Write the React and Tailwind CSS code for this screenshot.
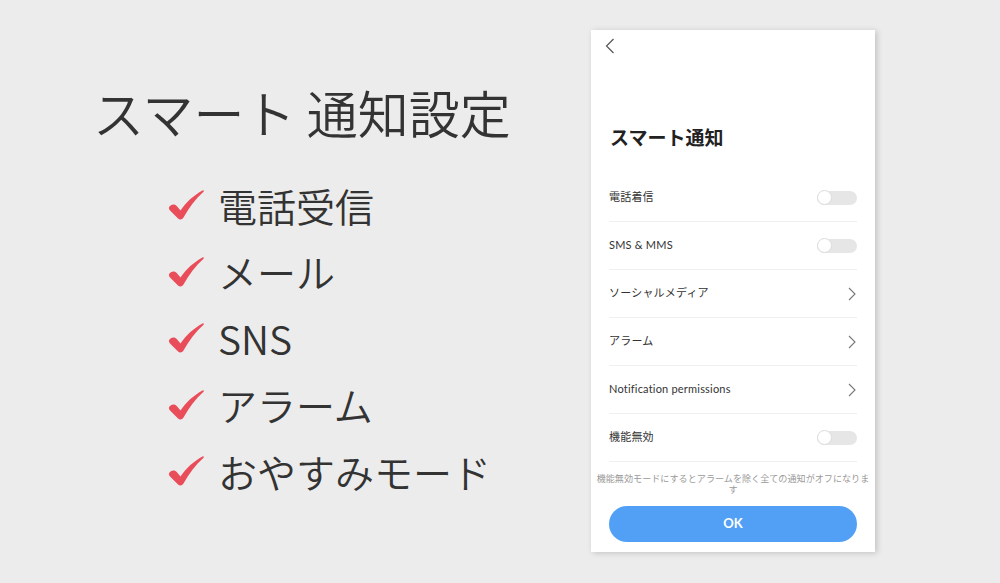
const features = ["電話受信", "メール", "SNS", "アラーム", "おやすみモード"];

const rows = [
  { label: "電話着信", kind: "toggle" },
  { label: "SMS & MMS", kind: "toggle" },
  { label: "ソーシャルメディア", kind: "link" },
  { label: "アラーム", kind: "link" },
  { label: "Notification permissions", kind: "link" },
  { label: "機能無効", kind: "toggle" },
];

function Check() {
  return (
    <svg width="36" height="30" viewBox="0 0 36 30" className="shrink-0">
      <path
        d="M1.5 16.5C3.5 13.8 6.5 13.8 8.5 15.8L12.5 20.5C18 12 26 5.2 34.5 0.5C35.8 0 36.3 1 35.3 2C27.5 9 20.8 18 15.5 27.5C14.2 29.8 11.5 30.2 9.8 28.2L2 20.5C0.8 19.3 0.6 17.6 1.5 16.5Z"
        fill="#e94d5a"
      />
    </svg>
  );
}

function Toggle() {
  return (
    <div className="relative w-[40px] h-[14px] rounded-full bg-[#e6e6e6]">
      <div className="absolute left-0 top-[-0.5px] w-[15px] h-[15px] rounded-full bg-white border border-[#dcdcdc]" />
    </div>
  );
}

function ChevronRight() {
  return (
    <svg width="8" height="14" viewBox="0 0 8 14" className="mr-[1px]">
      <path d="M1 1l6 6-6 6" fill="none" stroke="#777" strokeWidth="1.1" />
    </svg>
  );
}

export default function App() {
  return (
    <div
      className="w-[1000px] h-[583px] bg-[#ececec] flex justify-between pl-[93px] pr-[125px] pt-[30px] overflow-hidden"
      style={{ fontFamily: '"Noto Sans CJK JP", "Noto Sans", sans-serif' }}
    >
      <div className="text-[#333]">
        <h1 className="mt-[57px] text-[51px] leading-[50px] font-[350] whitespace-nowrap">
          スマート 通知設定
        </h1>
        <ul className="mt-[35px] ml-[75px]">
          {features.map((f) => (
            <li key={f} className="h-[66.5px] flex items-center gap-[14px]">
              <Check />
              <span className="text-[39px] leading-none font-[350] whitespace-nowrap">{f}</span>
            </li>
          ))}
        </ul>
      </div>

      <div
        className="w-[284px] h-[522px] bg-white shadow-[2px_1px_6px_rgba(0,0,0,0.18)] flex flex-col"
        style={{ fontFamily: 'Lato, "Noto Sans CJK JP", sans-serif' }}
      >
        <svg width="10" height="16" viewBox="0 0 10 16" className="ml-[14px] mt-[8px]">
          <path d="M8.5 1L1.5 8l7 7" fill="none" stroke="#555" strokeWidth="1.2" />
        </svg>
        <h2
          className="ml-[19px] mt-[73px] text-[19px] leading-[20px] font-bold text-[#222]"
          style={{ fontFamily: '"Noto Sans CJK JP", sans-serif' }}
        >
          スマート通知
        </h2>
        <div className="mt-[27px] px-[18px]">
          {rows.map((r) => (
            <div
              key={r.label}
              className="h-[48px] flex items-center justify-between border-b border-[#f0f0f0]"
            >
              <span className="text-[11px] text-[#333] tracking-[0.2px]">{r.label}</span>
              {r.kind === "toggle" ? <Toggle /> : <ChevronRight />}
            </div>
          ))}
        </div>
        <p className="mt-[11px] text-center text-[9.1px] leading-[11px] text-[#9a9a9a] whitespace-nowrap">
          機能無効モードにするとアラームを除く全ての通知がオフになりま
          <br />す
        </p>
        <button className="mt-[11px] mx-[18px] h-[36px] rounded-full bg-[#52a0f5] text-white text-[13px] font-bold">
          OK
        </button>
      </div>
    </div>
  );
}
